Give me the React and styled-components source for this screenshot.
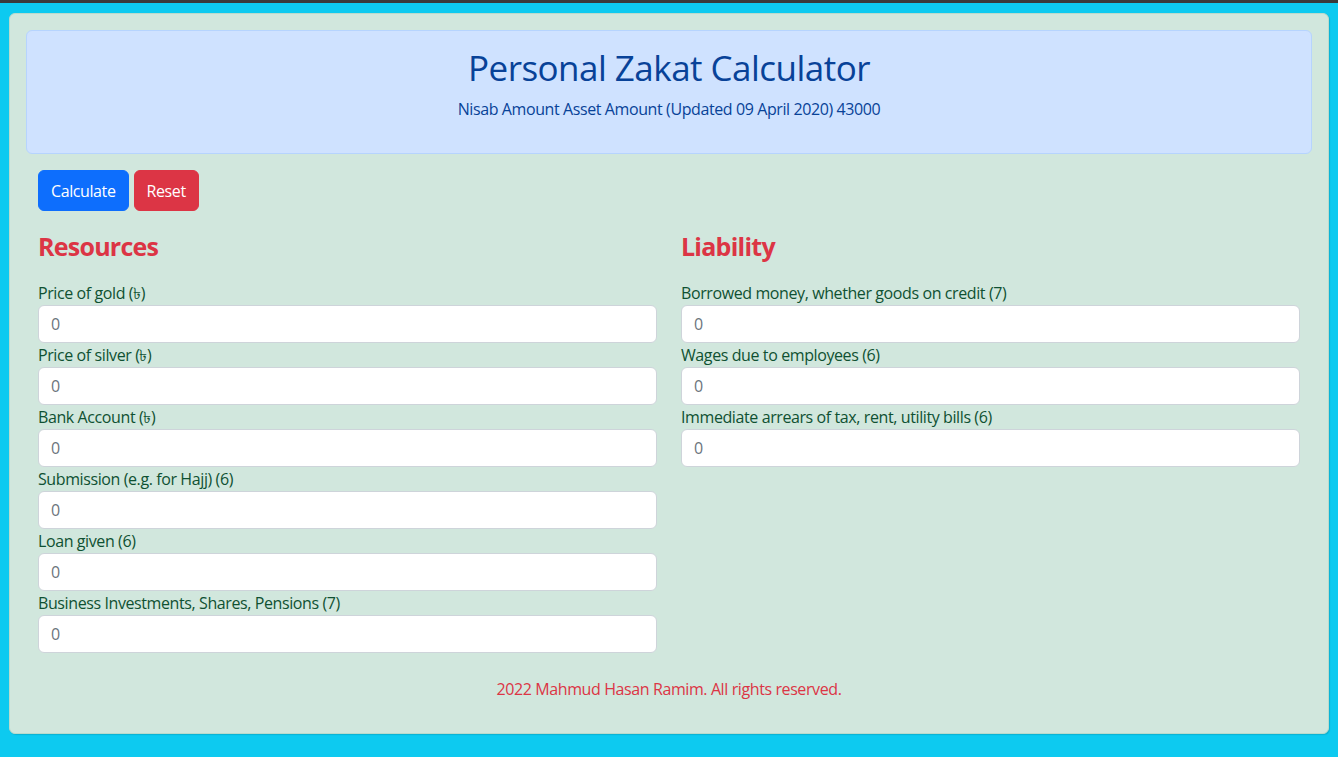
import React from "react";
import styled, { createGlobalStyle } from "styled-components";

const GlobalStyle = createGlobalStyle`
  html, body {
    margin: 0;
    padding: 0;
    background: #0dcaf0;
    font-family: "Open Sans", "Noto Sans", "Liberation Sans", sans-serif;
    font-size: 16px;
    line-height: 1.5;
    letter-spacing: -0.025em;
  }
  * { box-sizing: border-box; }
`;

const TopBar = styled.div`
  height: 3px;
  background: #3a3a3a;
`;

const Page = styled.div`
  padding: 10px 9px 24px;
`;

const Card = styled.div`
  background: #d1e7dd;
  border: 1px solid #badbcc;
  border-radius: 6px;
  padding: 16px;
  color: #0f5132;
  box-shadow: 1px 1px 1px rgba(0, 0, 0, 0.12);
`;

const Header = styled.div`
  background: #cfe2ff;
  border: 1px solid #b6d4fe;
  border-radius: 6px;
  padding: 16px;
  text-align: center;
  color: #084298;
  margin-bottom: 16px;
`;

const Title = styled.h1`
  margin: 0 0 8px;
  font-size: 35px;
  font-weight: 500;
  line-height: 1.2;
  letter-spacing: -0.015em;
`;

const Subtitle = styled.p`
  margin: 0 0 16px;
  font-size: 16px;
`;

const Actions = styled.div`
  display: flex;
  gap: 5px;
  padding: 0 12px;
  margin-bottom: 20px;
`;

const Button = styled.button`
  height: 41px;
  padding: 0 12px;
  border: 1px solid ${(p) => p.$bg};
  background: ${(p) => p.$bg};
  color: #fff;
  border-radius: 6px;
  font-family: inherit;
  font-size: 16px;
  letter-spacing: -0.025em;
  cursor: pointer;
`;

const Columns = styled.div`
  display: grid;
  grid-template-columns: 1fr 1fr;
  column-gap: 24px;
  padding: 0 12px;
`;

const Column = styled.div`
  display: flex;
  flex-direction: column;
`;

const SectionTitle = styled.h3`
  margin: 0 0 20px;
  font-size: 25px;
  font-weight: 700;
  line-height: 30px;
  letter-spacing: -0.03em;
  color: #dc3545;
`;

const Field = styled.div`
  display: flex;
  flex-direction: column;
`;

const Label = styled.label`
  font-size: 16px;
  line-height: 24px;
  color: #0f5132;
`;

const Input = styled.input`
  height: 38px;
  padding: 6px 12px;
  border: 1px solid #ced4da;
  border-radius: 6px;
  background: #fff;
  font-family: inherit;
  font-size: 16px;
  color: #212529;
  &::placeholder {
    color: #6c757d;
  }
`;

const Footer = styled.p`
  margin: 24px 0 16px;
  text-align: center;
  color: #dc3545;
  font-size: 16px;
  line-height: 24px;
`;

const resources = [
  "Price of gold (৳)",
  "Price of silver (৳)",
  "Bank Account (৳)",
  "Submission (e.g. for Hajj) (6)",
  "Loan given (6)",
  "Business Investments, Shares, Pensions (7)",
];

const liabilities = [
  "Borrowed money, whether goods on credit (7)",
  "Wages due to employees (6)",
  "Immediate arrears of tax, rent, utility bills (6)",
];

function FieldList({ items, prefix }) {
  return items.map((label, i) => (
    <Field key={label}>
      <Label htmlFor={`${prefix}-${i}`}>{label}</Label>
      <Input id={`${prefix}-${i}`} type="number" placeholder="0" />
    </Field>
  ));
}

export default function App() {
  return (
    <>
      <GlobalStyle />
      <TopBar />
      <Page>
        <Card>
          <Header>
            <Title>Personal Zakat Calculator</Title>
            <Subtitle>Nisab Amount Asset Amount (Updated 09 April 2020) 43000</Subtitle>
          </Header>
          <Actions>
            <Button $bg="#0d6efd">Calculate</Button>
            <Button $bg="#dc3545">Reset</Button>
          </Actions>
          <Columns>
            <Column>
              <SectionTitle>Resources</SectionTitle>
              <FieldList items={resources} prefix="res" />
            </Column>
            <Column>
              <SectionTitle>Liability</SectionTitle>
              <FieldList items={liabilities} prefix="lia" />
            </Column>
          </Columns>
          <Footer>2022 Mahmud Hasan Ramim. All rights reserved.</Footer>
        </Card>
      </Page>
    </>
  );
}
